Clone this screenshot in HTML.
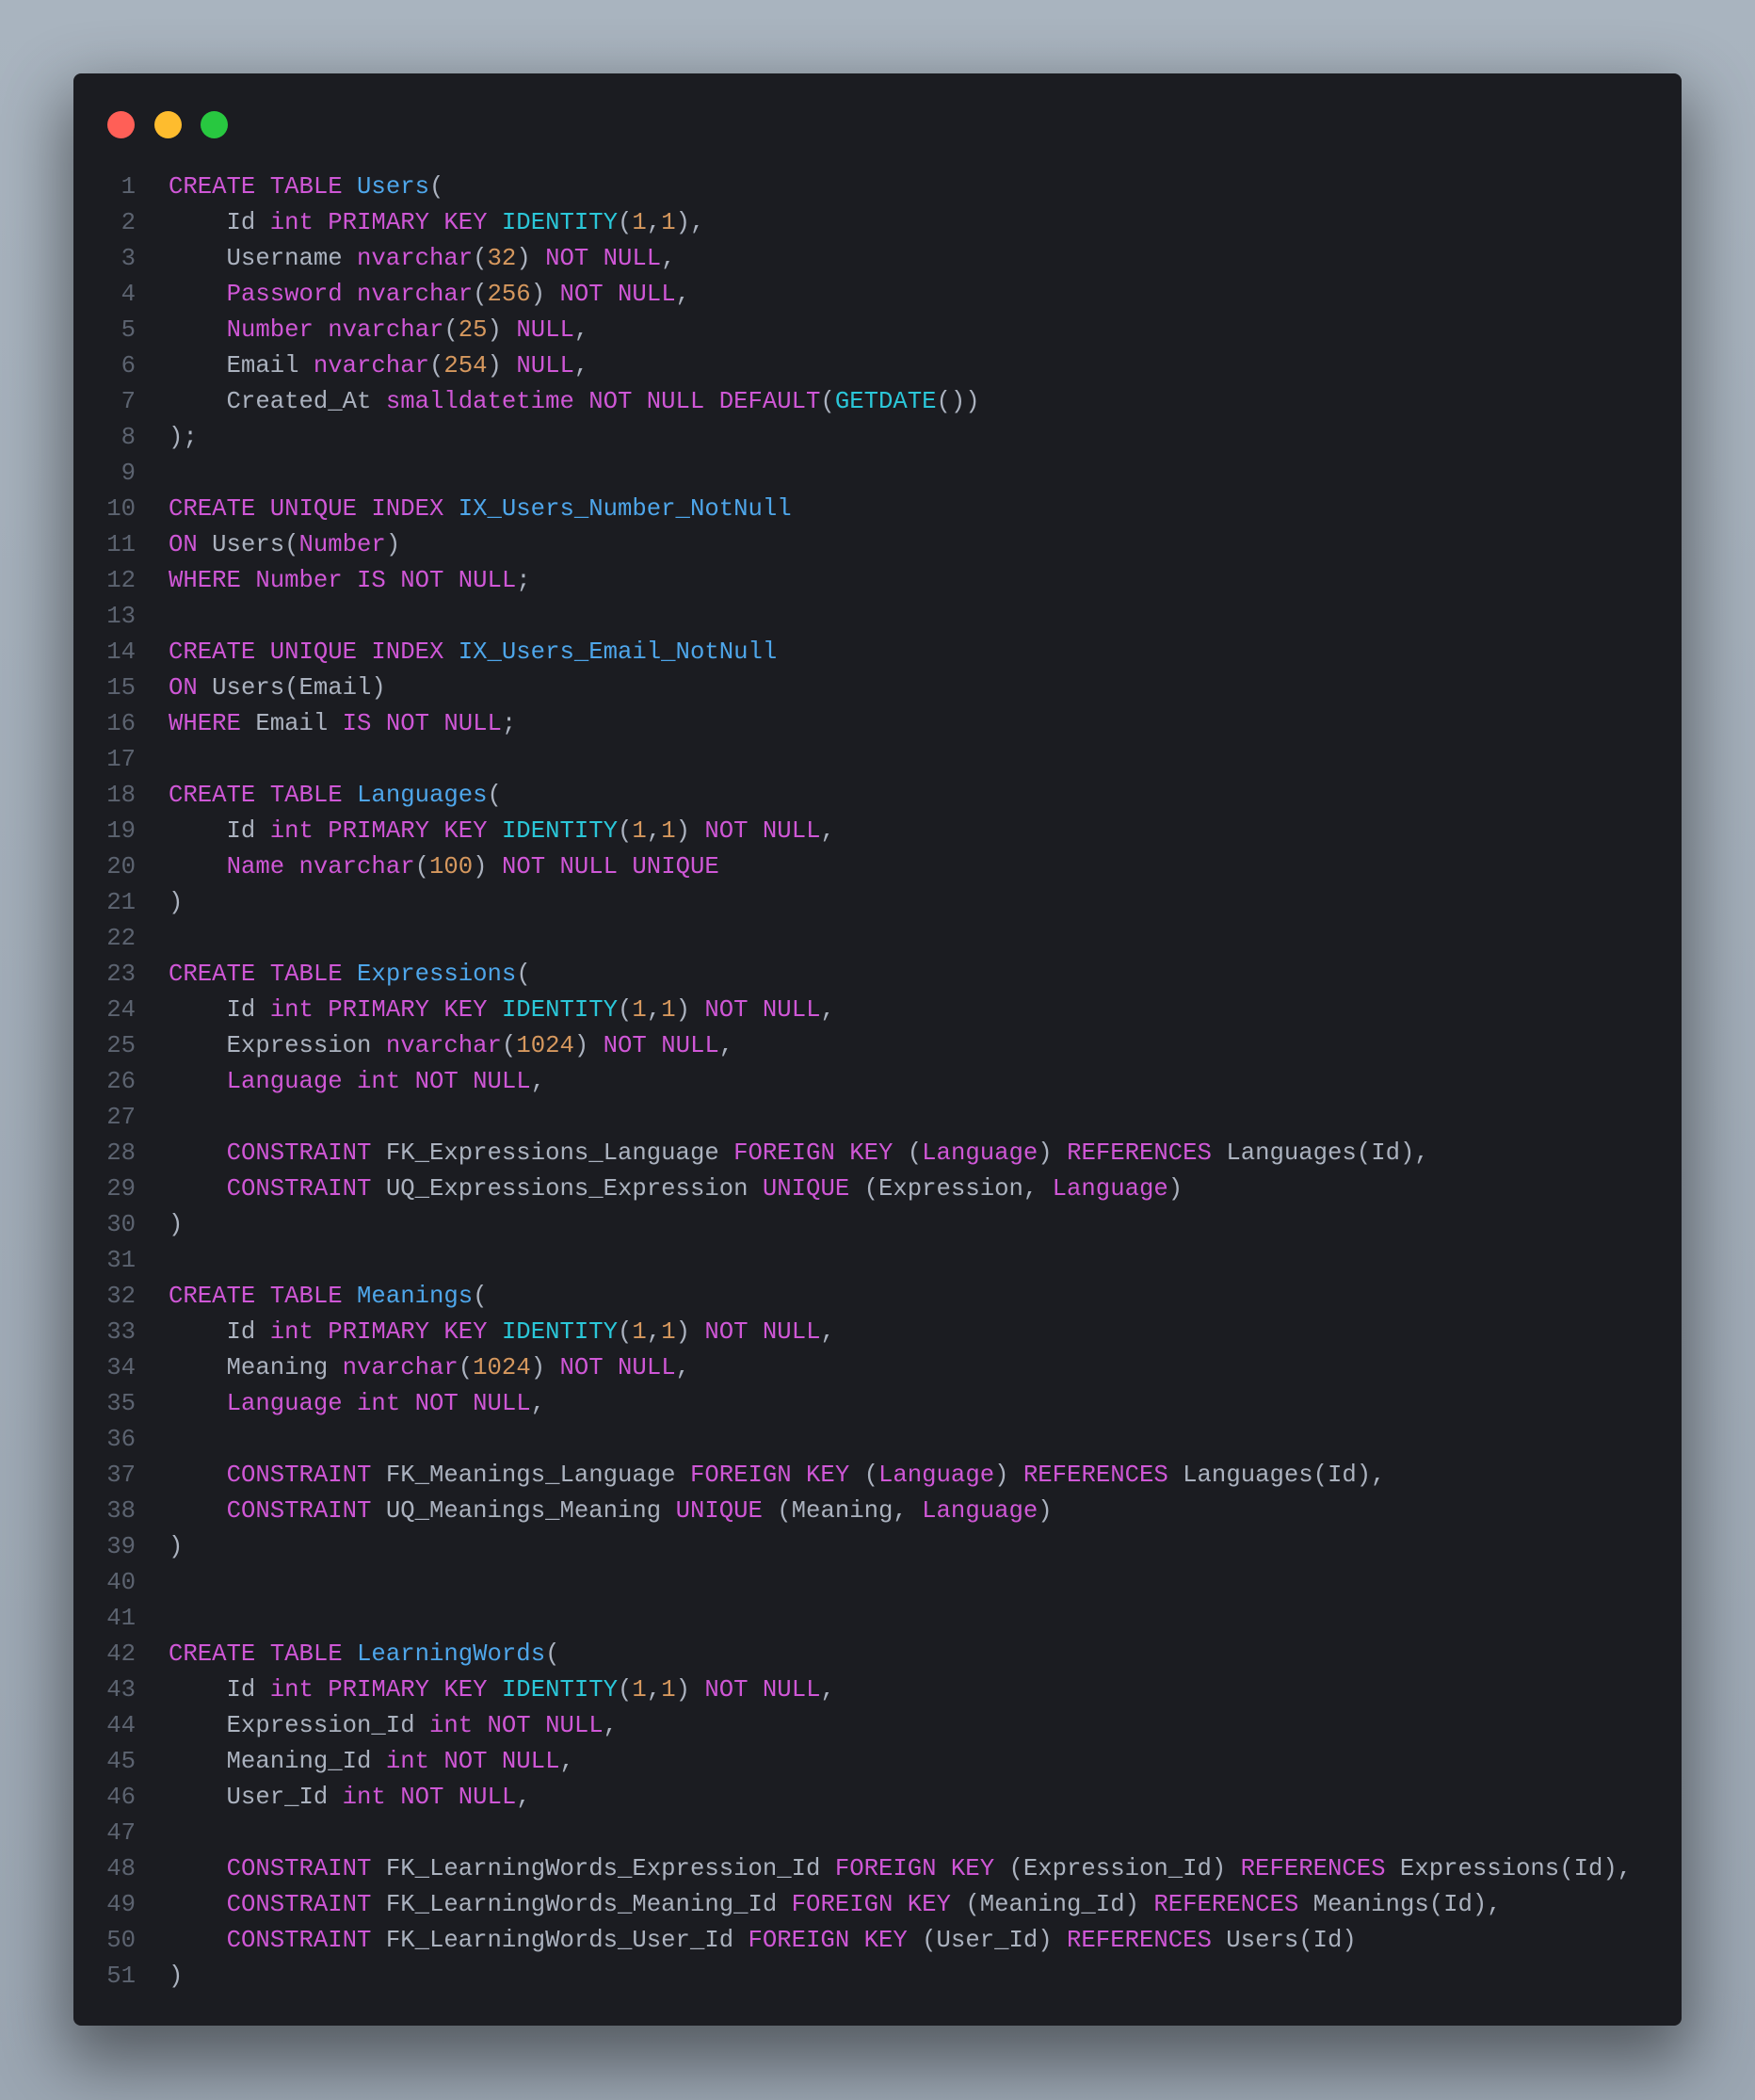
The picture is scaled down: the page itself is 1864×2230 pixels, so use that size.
<!DOCTYPE html>
<html><head><meta charset="utf-8"><style>
html,body{margin:0;padding:0}
body{width:1864px;height:2230px;background:linear-gradient(180deg,#a9b4bf,#9ba6b2);position:relative;overflow:hidden}
.win{position:absolute;left:78px;top:78px;width:1708px;height:2073px;background:#1b1c21;border-radius:8px;box-shadow:0 30px 70px 10px rgba(0,0,0,.45)}
.dot{position:absolute;top:40px;width:29px;height:29px;border-radius:50%}
pre{position:absolute;left:0;top:102px;margin:0;font-family:"Liberation Mono",monospace;font-size:25.65px;line-height:38px;color:#abb2bf}
.n{display:inline-block;width:101px;text-align:right;color:#5c6370;padding-right:35px;box-sizing:border-box}
.k{color:#cf57d6}.b{color:#4ea6ea}.c{color:#2bc7d9}.o{color:#d6985e}
</style></head><body>
<div class="win">
<div class="dot" style="left:36px;background:#ff5f57"></div>
<div class="dot" style="left:86px;background:#febc2e"></div>
<div class="dot" style="left:135px;background:#28c840"></div>
<pre>
<span class="n">1</span><span class="k">CREATE TABLE</span> <span class="b">Users</span>(
<span class="n">2</span>    Id <span class="k">int PRIMARY KEY</span> <span class="c">IDENTITY</span>(<span class="o">1</span>,<span class="o">1</span>),
<span class="n">3</span>    Username <span class="k">nvarchar</span>(<span class="o">32</span>) <span class="k">NOT NULL</span>,
<span class="n">4</span>    <span class="k">Password nvarchar</span>(<span class="o">256</span>) <span class="k">NOT NULL</span>,
<span class="n">5</span>    <span class="k">Number nvarchar</span>(<span class="o">25</span>) <span class="k">NULL</span>,
<span class="n">6</span>    Email <span class="k">nvarchar</span>(<span class="o">254</span>) <span class="k">NULL</span>,
<span class="n">7</span>    Created_At <span class="k">smalldatetime NOT NULL DEFAULT</span>(<span class="c">GETDATE</span>())
<span class="n">8</span>);
<span class="n">9</span>
<span class="n">10</span><span class="k">CREATE UNIQUE INDEX</span> <span class="b">IX_Users_Number_NotNull</span>
<span class="n">11</span><span class="k">ON</span> Users(<span class="k">Number</span>)
<span class="n">12</span><span class="k">WHERE Number IS NOT NULL</span>;
<span class="n">13</span>
<span class="n">14</span><span class="k">CREATE UNIQUE INDEX</span> <span class="b">IX_Users_Email_NotNull</span>
<span class="n">15</span><span class="k">ON</span> Users(Email)
<span class="n">16</span><span class="k">WHERE</span> Email <span class="k">IS NOT NULL</span>;
<span class="n">17</span>
<span class="n">18</span><span class="k">CREATE TABLE</span> <span class="b">Languages</span>(
<span class="n">19</span>    Id <span class="k">int PRIMARY KEY</span> <span class="c">IDENTITY</span>(<span class="o">1</span>,<span class="o">1</span>) <span class="k">NOT NULL</span>,
<span class="n">20</span>    <span class="k">Name nvarchar</span>(<span class="o">100</span>) <span class="k">NOT NULL UNIQUE</span>
<span class="n">21</span>)
<span class="n">22</span>
<span class="n">23</span><span class="k">CREATE TABLE</span> <span class="b">Expressions</span>(
<span class="n">24</span>    Id <span class="k">int PRIMARY KEY</span> <span class="c">IDENTITY</span>(<span class="o">1</span>,<span class="o">1</span>) <span class="k">NOT NULL</span>,
<span class="n">25</span>    Expression <span class="k">nvarchar</span>(<span class="o">1024</span>) <span class="k">NOT NULL</span>,
<span class="n">26</span>    <span class="k">Language int NOT NULL</span>,
<span class="n">27</span>
<span class="n">28</span>    <span class="k">CONSTRAINT</span> FK_Expressions_Language <span class="k">FOREIGN KEY</span> (<span class="k">Language</span>) <span class="k">REFERENCES</span> Languages(Id),
<span class="n">29</span>    <span class="k">CONSTRAINT</span> UQ_Expressions_Expression <span class="k">UNIQUE</span> (Expression, <span class="k">Language</span>)
<span class="n">30</span>)
<span class="n">31</span>
<span class="n">32</span><span class="k">CREATE TABLE</span> <span class="b">Meanings</span>(
<span class="n">33</span>    Id <span class="k">int PRIMARY KEY</span> <span class="c">IDENTITY</span>(<span class="o">1</span>,<span class="o">1</span>) <span class="k">NOT NULL</span>,
<span class="n">34</span>    Meaning <span class="k">nvarchar</span>(<span class="o">1024</span>) <span class="k">NOT NULL</span>,
<span class="n">35</span>    <span class="k">Language int NOT NULL</span>,
<span class="n">36</span>
<span class="n">37</span>    <span class="k">CONSTRAINT</span> FK_Meanings_Language <span class="k">FOREIGN KEY</span> (<span class="k">Language</span>) <span class="k">REFERENCES</span> Languages(Id),
<span class="n">38</span>    <span class="k">CONSTRAINT</span> UQ_Meanings_Meaning <span class="k">UNIQUE</span> (Meaning, <span class="k">Language</span>)
<span class="n">39</span>)
<span class="n">40</span>
<span class="n">41</span>
<span class="n">42</span><span class="k">CREATE TABLE</span> <span class="b">LearningWords</span>(
<span class="n">43</span>    Id <span class="k">int PRIMARY KEY</span> <span class="c">IDENTITY</span>(<span class="o">1</span>,<span class="o">1</span>) <span class="k">NOT NULL</span>,
<span class="n">44</span>    Expression_Id <span class="k">int NOT NULL</span>,
<span class="n">45</span>    Meaning_Id <span class="k">int NOT NULL</span>,
<span class="n">46</span>    User_Id <span class="k">int NOT NULL</span>,
<span class="n">47</span>
<span class="n">48</span>    <span class="k">CONSTRAINT</span> FK_LearningWords_Expression_Id <span class="k">FOREIGN KEY</span> (Expression_Id) <span class="k">REFERENCES</span> Expressions(Id),
<span class="n">49</span>    <span class="k">CONSTRAINT</span> FK_LearningWords_Meaning_Id <span class="k">FOREIGN KEY</span> (Meaning_Id) <span class="k">REFERENCES</span> Meanings(Id),
<span class="n">50</span>    <span class="k">CONSTRAINT</span> FK_LearningWords_User_Id <span class="k">FOREIGN KEY</span> (User_Id) <span class="k">REFERENCES</span> Users(Id)
<span class="n">51</span>)
</pre>
</div>
</body></html>
